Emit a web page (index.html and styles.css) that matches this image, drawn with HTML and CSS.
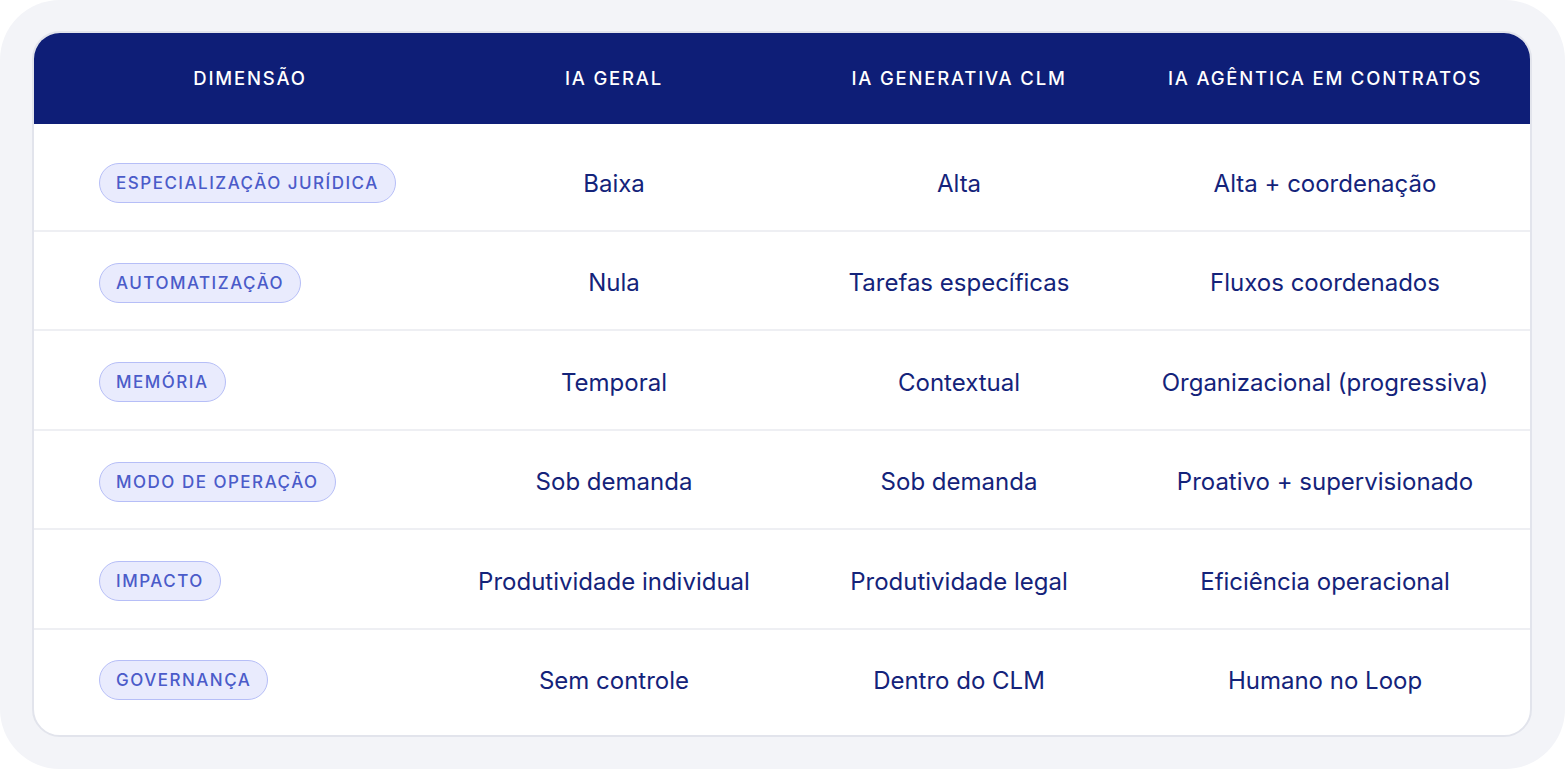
FILE: index.html
```html
<!DOCTYPE html>
<html lang="pt">
<head>
<meta charset="utf-8">
<title>Comparação de IA</title>
<link rel="stylesheet" href="styles.css">
</head>
<body>
<div class="frame">
  <div class="card">
    <div class="row head">
      <div class="cell">Dimensão</div>
      <div class="cell">IA Geral</div>
      <div class="cell">IA Generativa CLM</div>
      <div class="cell">IA Agêntica em contratos</div>
    </div>
    <div class="body">
      <div class="row">
        <div class="cell dim"><span class="pill">Especialização jurídica</span></div>
        <div class="cell">Baixa</div>
        <div class="cell">Alta</div>
        <div class="cell">Alta + coordenação</div>
      </div>
      <div class="row">
        <div class="cell dim"><span class="pill">Automatização</span></div>
        <div class="cell">Nula</div>
        <div class="cell">Tarefas específicas</div>
        <div class="cell">Fluxos coordenados</div>
      </div>
      <div class="row">
        <div class="cell dim"><span class="pill">Memória</span></div>
        <div class="cell">Temporal</div>
        <div class="cell">Contextual</div>
        <div class="cell">Organizacional (progressiva)</div>
      </div>
      <div class="row">
        <div class="cell dim"><span class="pill">Modo de operação</span></div>
        <div class="cell">Sob demanda</div>
        <div class="cell">Sob demanda</div>
        <div class="cell">Proativo + supervisionado</div>
      </div>
      <div class="row">
        <div class="cell dim"><span class="pill">Impacto</span></div>
        <div class="cell">Produtividade individual</div>
        <div class="cell">Produtividade legal</div>
        <div class="cell">Eficiência operacional</div>
      </div>
      <div class="row">
        <div class="cell dim"><span class="pill">Governança</span></div>
        <div class="cell">Sem controle</div>
        <div class="cell">Dentro do CLM</div>
        <div class="cell">Humano no Loop</div>
      </div>
    </div>
  </div>
</div>
</body>
</html>
```

FILE: styles.css
```css
* { box-sizing: border-box; }
html, body { margin: 0; padding: 0; background: #ffffff; }
body {
  font-family: Inter, "Noto Sans", "Liberation Sans", sans-serif;
  color: #14237a;
}
.frame {
  width: 1565px;
  height: 769px;
  background: #f3f4f8;
  border-radius: 60px;
  padding: 31px 33px 32px 32px;
}
.card {
  height: 100%;
  background: #ffffff;
  border: 2px solid #e2e4ec;
  border-radius: 28px;
  overflow: hidden;
}
.row {
  display: grid;
  grid-template-columns: 432px 296px 394px 338px;
  align-items: center;
}
.head {
  background: #0e1e77;
  height: 93px;
  margin: -2px -2px 0 -2px;
  padding: 0 2px;
  box-sizing: content-box;
  color: #ffffff;
  font-weight: 500;
  text-transform: uppercase;
}
.head .cell {
  text-align: center;
  font-size: 18.5px;
  line-height: 24px;
  letter-spacing: 1.8px;
  height: auto;
  display: block;
}
.body { padding: 8px 0; }
.body .row {
  height: 99.5px;
  padding: 31px 0 26px;
  border-bottom: 2px solid #eeeff3;
}
.body .row:last-child { border-bottom: none; padding-top: 28px; }
.cell {
  display: flex;
  align-items: center;
  justify-content: center;
  height: 40px;
  font-size: 24px;
  white-space: nowrap;
}
.body .cell.dim { justify-content: flex-start; padding-left: 65px; }
.pill {
  display: inline-flex;
  align-items: center;
  height: 40px;
  padding: 0 16px;
  border: 1.5px solid #b6bef7;
  background: #e9ebfd;
  border-radius: 20px;
  color: #4b5bc9;
  font-size: 17px;
  font-weight: 500;
  letter-spacing: 1.5px;
  text-transform: uppercase;
}
```
